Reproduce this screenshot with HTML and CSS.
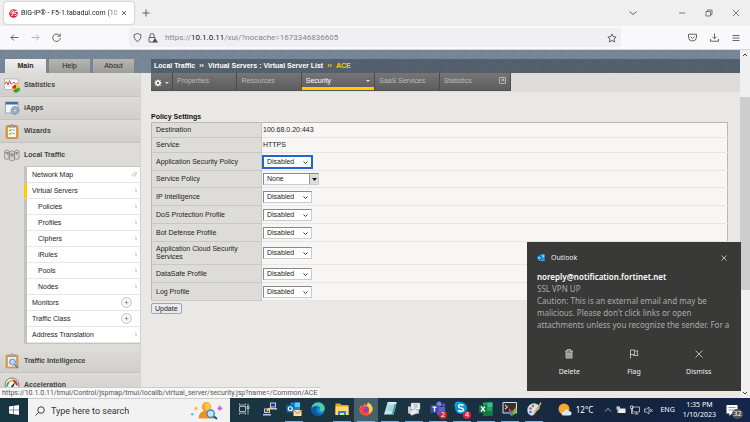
FILE: index.html
```html
<!DOCTYPE html>
<html lang="en">
<head>
<meta charset="utf-8">
<title>BIG-IP® - F5-1.tabadul.com</title>
<link rel="stylesheet" href="styles.css">
</head>
<body>
<header class="tabstrip">
  <div class="browser-tab">
    <svg class="i9" viewBox="0 0 18 18"><circle cx="9" cy="9" r="8.5" fill="#c8202f"/><path d="M3 6q3-4 6-2M4 13l4-1V6q0-2 3-2M3 8h7M11 13q4 1 4-2t-4-2l1-4h4" fill="none" stroke="#fff" stroke-width="1.8"/></svg>
    <span class="browser-tab-title">BIG-IP® - F5-1.tabadul.com (10</span>
    <button class="bare" aria-label="Close tab"><svg class="i6" viewBox="0 0 12 12"><path d="M2 2l8 8M10 2l-8 8" class="ln"/></svg></button>
  </div>
  <button class="bare new-tab" aria-label="New tab"><svg class="i8" viewBox="0 0 16 16"><path d="M8 1v14M1 8h14" class="ln"/></svg></button>
  <div class="window-buttons">
    <button class="bare" aria-label="List tabs"><svg class="i8" viewBox="0 0 16 16"><path d="M1 5l7 6 7-6" class="ln"/></svg></button>
    <button class="bare push" aria-label="Minimize"><svg class="i8" viewBox="0 0 16 16"><path d="M2 8h12" class="ln thin"/></svg></button>
    <button class="bare" aria-label="Restore"><svg class="i8" viewBox="0 0 16 16"><path d="M2 5h9v9H2zM5 5V2h9v9h-3" class="ln thin"/></svg></button>
    <button class="bare" aria-label="Close"><svg class="i8" viewBox="0 0 16 16"><path d="M2 2l12 12M14 2L2 14" class="ln thin"/></svg></button>
  </div>
</header>
<nav class="toolbar" aria-label="Browser">
  <div class="history">
    <button class="bare" aria-label="Back"><svg class="i9" viewBox="0 0 18 18"><path d="M17 9H2M8 3L2 9l6 6" class="ln"/></svg></button>
    <button class="bare faded" aria-label="Forward"><svg class="i9" viewBox="0 0 18 18"><path d="M1 9h15M10 3l6 6-6 6" class="ln"/></svg></button>
    <button class="bare" aria-label="Reload"><svg class="i9" viewBox="0 0 18 18"><path d="M15 5a7.500 7.500 0 1 0 1.500 5M16.500 1v5.500H11" class="ln"/></svg></button>
  </div>
  <div class="urlbar">
    <svg class="i9" viewBox="0 0 18 18"><path d="M9 1l7 2.500C16 10 14 14.500 9 17 4 14.500 2 10 2 3.500z" class="ln"/></svg>
    <svg class="i10" viewBox="0 0 20 20"><path d="M4 9V5a4 4 0 0 1 8 0v4M9 18H2V9h12v2" class="ln"/><path d="M14 10l6 9H8z" fill="#4a4a52"/></svg>
    <span class="url">https://<b>10.1.0.11</b>/xui/?nocache=1673346836605</span>
    <button class="bare" aria-label="Bookmark"><svg class="i10" viewBox="0 0 20 20"><path d="M10 2l2.500 5.300 5.800.7-4.300 4 1.200 5.800L10 15l-5.200 2.800L6 12 1.700 8l5.800-.7z" class="ln"/></svg></button>
  </div>
  <div class="tools">
    <button class="bare" aria-label="Pocket"><svg class="i9" viewBox="0 0 18 18"><path d="M1 2.500h16V8a8 8 0 0 1-16 0zM5 7l4 4 4-4" class="ln"/></svg></button>
    <button class="bare" aria-label="Downloads"><svg class="i9" viewBox="0 0 18 18"><path d="M9 1v10M5 7.500L9 11.500l4-4M1 12v4.500h16V12" class="ln"/></svg></button>
    <button class="bare" aria-label="Menu"><svg class="i8" viewBox="0 0 16 16"><path d="M1 3h14M1 8h14M1 13h14" class="ln"/></svg></button>
  </div>
</nav>

<div class="viewport">
  <div class="page">
    <header class="site-head">
      <nav class="main-tabs"><a href="#" class="on">Main</a><a href="#">Help</a><a href="#">About</a></nav>
      <div class="crumbs"><span>Local Traffic</span><i>››</i><span>Virtual Servers : Virtual Server List</span><i class="gold">››</i><span class="gold">ACE</span></div>
    </header>
    <div class="columns">
      <aside class="sidebar">
        <a href="#" class="section"><svg class="i16" viewBox="0 0 32 32"><path d="M1 4h27v21H1z" fill="#fff" stroke="#aaa" stroke-width="1.500"/><path d="M3 19h23" stroke="#ccc"/><path d="M2 14l3-5 3 7 3-9 3 7 3-1 3-3 3 4 4-1" fill="none" stroke="#d8474d" stroke-width="2"/><circle cx="24" cy="23" r="7.500" fill="#f3c62b"/><path d="M24 23v-7.500a7.500 7.500 0 0 0-7.500 7.500z" fill="#d62a2a"/><path d="M24 23l7.500-1A7.500 7.500 0 0 1 18 28z" fill="#39a535"/></svg>Statistics</a>
        <a href="#" class="section"><svg class="i16" viewBox="0 0 32 32"><path d="M3 4h25v22H3z" fill="#f3f6f8" stroke="#8297a9" stroke-width="1.500"/><path d="M3 4h25v5H3z" fill="#3c73ab"/><circle cx="22" cy="21" r="8" fill="#9eb0bc" stroke="#728796" stroke-width="2" stroke-dasharray="3 2"/><circle cx="22" cy="21" r="3" fill="#d8e1e6" stroke="#728796"/></svg>iApps</a>
        <a href="#" class="section"><svg class="i16" viewBox="0 0 32 32"><rect x="4" y="5" width="24" height="26" rx="3" fill="#e69b3d" stroke="#ac6d25"/><path d="M8 9h16v19H8z" fill="#f5f7ef"/><path d="M10 8V5h4q2-6 4 0h4v3z" fill="#aaa" stroke="#777"/><path d="M10 14l2 2 3-4M10 21l2 2 3-4" fill="none" stroke="#55a834" stroke-width="2"/><path d="M17 14h5M17 21h5" stroke="#aaa" stroke-width="2"/></svg>Wizards</a>
        <a href="#" class="section open"><svg class="i16" viewBox="0 0 32 32"><g fill="#d4d3cf" stroke="#85847f" stroke-width="1.500"><path d="M1 8q4-4 9 0v15q-5 4-9 0zM21 8q4-4 9 0v15q-5 4-9 0zM11 10q5-5 10 0v16q-5 4-10 0z"/><path d="M2 11h7M23 11h6M12 14h8M12 18h8"/></g><circle cx="7" cy="13" r="2" fill="#c65f5b"/><circle cx="25" cy="13" r="2" fill="#c65f5b"/><circle cx="16" cy="15" r="2" fill="#c65f5b"/></svg>Local Traffic</a>
        <nav class="submenu">
          <a href="#">Network Map<svg class="i5" viewBox="0 0 10 10"><path d="M1 8V4h6v4zM4 3V1h5v4" fill="none" stroke="#aaa"/></svg></a>
          <a href="#" class="current">Virtual Servers<i>›</i></a>
          <a href="#" class="child">Policies<i>›</i></a>
          <a href="#" class="child">Profiles<i>›</i></a>
          <a href="#" class="child">Ciphers<i>›</i></a>
          <a href="#" class="child">iRules<i>›</i></a>
          <a href="#" class="child">Pools<i>›</i></a>
          <a href="#" class="child">Nodes<i>›</i></a>
          <a href="#">Monitors<svg class="plus" viewBox="0 0 22 22"><circle cx="11" cy="11" r="9.500" fill="none" stroke="#aaa" stroke-width="1.600"/><path d="M11 7v8M7 11h8" stroke="#999" stroke-width="2"/></svg></a>
          <a href="#">Traffic Class<svg class="plus" viewBox="0 0 22 22"><circle cx="11" cy="11" r="9.500" fill="none" stroke="#aaa" stroke-width="1.600"/><path d="M11 7v8M7 11h8" stroke="#999" stroke-width="2"/></svg></a>
          <a href="#">Address Translation<i>›</i></a>
        </nav>
        <a href="#" class="section"><svg class="i16" viewBox="0 0 32 32"><rect x="4" y="4" width="24" height="26" rx="2" fill="#e0a458" stroke="#b27a35"/><path d="M8 8h16v19H8z" fill="#edf1f3"/><path d="M10 7V4h4q2-6 4 0h4v3z" fill="#bbb" stroke="#777"/><circle cx="17" cy="18" r="6" fill="#b9d8ef" stroke="#6b91b1" stroke-width="2"/><path d="M21 23l7 7" stroke="#5e7e9d" stroke-width="3"/></svg>Traffic Intelligence</a>
        <a href="#" class="section"><svg class="i16" viewBox="0 0 32 32"><circle cx="16" cy="16" r="14" fill="#f6f6f6" stroke="#777" stroke-width="2"/><g fill="none" stroke-width="4"><path d="M6 19q0-6 4-9" stroke="#39a64b"/><path d="M10 10q4-4 8-3" stroke="#eebd26"/><path d="M18 7q7 2 8 10" stroke="#d63232"/></g><path d="M14 19l9-10-5 12z" fill="#222"/></svg>Acceleration</a>
      </aside>
      <main class="content">
        <nav class="subtabs">
          <div class="subtab-list">
            <button class="gear" aria-label="Options"><svg class="i8" viewBox="0 0 16 16"><circle cx="8" cy="8" r="4" fill="none" stroke="#fff" stroke-width="3"/><path d="M8 1v3M8 12v3M1 8h3M12 8h3M3 3l2 2M11 11l2 2M13 3l-2 2M5 11l-2 2" stroke="#fff" stroke-width="2"/></svg><svg class="i4" viewBox="0 0 8 8"><path d="M0 2h8L4 6z" fill="#ddd"/></svg></button>
            <a href="#">Properties</a><a href="#">Resources</a>
            <a href="#" class="on wide">Security<svg class="i4" viewBox="0 0 8 8"><path d="M0 2h8L4 6z" fill="#ddd"/></svg></a>
            <a href="#">SaaS Services</a>
            <a href="#" class="wide last">Statistics<svg class="i7" viewBox="0 0 14 14"><rect x="1" y="1" width="12" height="12" rx="1" fill="none" stroke="#ccc" stroke-width="1.500"/><path d="M5 9l4-4M5.500 4.500H9.500V8.500" fill="none" stroke="#ddd" stroke-width="1.500"/></svg></a>
          </div>
        </nav>
        <form class="policy">
          <h1>Policy Settings</h1>
          <table>
            <tbody>
            <tr class="short"><th scope="row">Destination</th><td>100.68.0.20:443</td></tr>
            <tr class="short"><th scope="row">Service</th><td>HTTPS</td></tr>
            <tr><th scope="row"><label for="asp">Application Security Policy</label></th><td><span class="pick focus"><select id="asp"><option>Disabled</option><option>Enabled</option></select><svg class="i5" viewBox="0 0 10 10"><path d="M1 3l4 4 4-4" class="chev"/></svg></span></td></tr>
            <tr class="snug"><th scope="row"><label for="sp">Service Policy</label></th><td><span class="pick combo"><select id="sp"><option>None</option></select><svg class="i5" viewBox="0 0 10 10"><path d="M0 2h10L5 8z" fill="#111"/></svg></span></td></tr>
            <tr><th scope="row"><label for="ipi">IP Intelligence</label></th><td><span class="pick"><select id="ipi"><option>Disabled</option><option>Enabled</option></select><svg class="i5" viewBox="0 0 10 10"><path d="M1 3l4 4 4-4" class="chev"/></svg></span></td></tr>
            <tr><th scope="row"><label for="dos">DoS Protection Profile</label></th><td><span class="pick"><select id="dos"><option>Disabled</option><option>Enabled</option></select><svg class="i5" viewBox="0 0 10 10"><path d="M1 3l4 4 4-4" class="chev"/></svg></span></td></tr>
            <tr><th scope="row"><label for="bot">Bot Defense Profile</label></th><td><span class="pick"><select id="bot"><option>Disabled</option><option>Enabled</option></select><svg class="i5" viewBox="0 0 10 10"><path d="M1 3l4 4 4-4" class="chev"/></svg></span></td></tr>
            <tr class="double"><th scope="row"><label for="acs">Application Cloud Security Services</label></th><td><span class="pick"><select id="acs"><option>Disabled</option><option>Enabled</option></select><svg class="i5" viewBox="0 0 10 10"><path d="M1 3l4 4 4-4" class="chev"/></svg></span></td></tr>
            <tr><th scope="row"><label for="ds">DataSafe Profile</label></th><td><span class="pick"><select id="ds"><option>Disabled</option><option>Enabled</option></select><svg class="i5" viewBox="0 0 10 10"><path d="M1 3l4 4 4-4" class="chev"/></svg></span></td></tr>
            <tr><th scope="row"><label for="log">Log Profile</label></th><td><span class="pick"><select id="log"><option>Disabled</option><option>Enabled</option></select><svg class="i5" viewBox="0 0 10 10"><path d="M1 3l4 4 4-4" class="chev"/></svg></span></td></tr>
            </tbody>
          </table>
          <button type="button" class="update">Update</button>
        </form>
      </main>
    </div>
  </div>
  <div class="scrollbar">
    <svg class="i6" viewBox="0 0 12 12"><path d="M2 8l4-4 4 4" class="chev"/></svg>
    <div class="track"><div class="thumb"></div></div>
    <svg class="i6" viewBox="0 0 12 12"><path d="M2 4l4 4 4-4" class="chev"/></svg>
  </div>
  <div class="status">https://10.1.0.11/tmui/Control/jspmap/tmui/locallb/virtual_server/security.jsp?name=/Common/ACE</div>
  <section class="toast" aria-label="Outlook notification">
    <header><svg class="i8" viewBox="0 0 16 16"><path d="M5 1h10v13H5z" fill="#1490df"/><path d="M10 1h5v6h-5z" fill="#50d9ff"/><path d="M5 9l5 3 5-3v5H5z" fill="#28a8ea"/><path d="M0 4h9v8H0z" fill="#0a63b5"/><circle cx="4.500" cy="8" r="2.200" fill="none" stroke="#fff" stroke-width="1.400"/></svg><span>Outlook</span><button class="bare" aria-label="Close notification"><svg class="i6" viewBox="0 0 12 12"><path d="M1 1l10 10M11 1L1 11" class="lt"/></svg></button></header>
    <h2>noreply@notification.fortinet.net</h2>
    <p>SSL VPN UP</p>
    <p>Caution: This is an external email and may be<br>malicious. Please don't click links or open<br>attachments unless you recognize the sender. For a</p>
    <div class="actions">
      <button><svg class="i10" viewBox="0 0 20 20"><path d="M2 4h16M7 4V1h6v3M4 4v14h12V4M8 8v7M12 8v7" class="lt"/><path d="M4 5h12v13H4z" fill="#ddd" opacity=".45"/></svg>Delete</button>
      <button><svg class="i10" viewBox="0 0 20 20"><path d="M3 19V2h8v9H3M11 4h7l-2 4 2 5H9v-2" class="lt"/></svg>Flag</button>
      <button><svg class="i10" viewBox="0 0 20 20"><path d="M3 3l14 14M17 3L3 17" class="lt"/></svg>Dismiss</button>
    </div>
  </section>
</div>

<footer class="taskbar">
  <button class="bare start" aria-label="Start"><svg class="i10" viewBox="0 0 20 20"><path d="M0 3l9-1.300V9.500H0zM10 1.500L20 0v9.500H10zM0 10.500h9v7.800L0 17zM10 10.500h10V20l-10-1.500z" fill="#fff"/></svg></button>
  <div class="search">
    <svg class="i10" viewBox="0 0 20 20"><circle cx="12" cy="8" r="6.500" fill="none" stroke="#222" stroke-width="1.700"/><path d="M7.500 12.500L1 19" stroke="#222" stroke-width="1.700"/></svg>
    <input type="text" aria-label="Search" placeholder="Type here to search">
    <svg class="doodle" viewBox="0 0 64 36"><circle cx="31" cy="11" r="9" fill="#f6a52b"/><path d="M16 33q1-13 11-14h8q9 2 11 14z" fill="#ef8f20"/><path d="M27 8q5-8 11 0v10h-7z" fill="#ffc352"/><path d="M43 28l8 6" stroke="#294ea2" stroke-width="4"/><circle cx="39" cy="24" r="7" fill="#b8e8fb" stroke="#4586cf" stroke-width="2.500"/><circle cx="11" cy="14" r="3" fill="#f5c13d"/><circle cx="4" cy="25" r="2.500" fill="#4fc5dc"/><path d="M56 9v9M52 14h9" stroke="#c35ada" stroke-width="3"/></svg>
  </div>
  <div class="apps">
    <button class="task-view" aria-label="Task view"><svg class="i12" viewBox="0 0 24 24"><path d="M3 1v3h12V1M3 23v-3h12v3M3 7h12v10H3zM20 1v22M18 7h4v4h-4z" fill="none" stroke="#ddd" stroke-width="1.500"/></svg></button>
    <button aria-label="PuTTY"><svg class="i14" viewBox="0 0 28 28"><g fill="#c9cbd1"><path d="M14 1h12v10H14zM12 12h16v3H12zM2 13h12v9H2zM0 24h16v3H0z"/></g><path d="M16 3h8v6h-8zM4 15h8v5H4z" fill="#1e35b8"/><path d="M20 9l-8 5 3 1-9 5 3-5-3-1z" fill="#ffe62e"/></svg></button>
    <button class="run" aria-label="Outlook"><svg class="i16" viewBox="0 0 32 32"><path d="M9 3h19v18H9z" fill="#1684d8"/><path d="M18 3h10v9H18z" fill="#55cef8"/><path d="M1 8h15v15H1z" fill="#1267b8"/><circle cx="8.500" cy="15.500" r="4" fill="none" stroke="#fff" stroke-width="2.400"/><path d="M15 18h16v12H15z" fill="#f7dfae"/><path d="M15 18l8 7 8-7" fill="none" stroke="#c07b2b" stroke-width="2"/></svg></button>
    <button aria-label="Edge"><svg class="i14" viewBox="0 0 28 28"><circle cx="14" cy="14" r="13.500" fill="#1687cf"/><path d="M1 13C3-2 25-3 27.500 12c0 8-9 8-11 5 5-6-1-11-7-9-5 1-8 4-8.500 5z" fill="#48d2a0"/><path d="M1 13c4-7 12-5 12-2-5 4-2 12 5 13 4 0 6-1 8-2-7 10-25 6-25-9z" fill="#0b5aa9"/></svg></button>
    <button class="run" aria-label="File Explorer"><svg class="i14" viewBox="0 0 28 28"><path d="M1 3h9l3 3h14v20H1z" fill="#e9a720"/><path d="M1 9h26v17H1z" fill="#ffdc6b"/><path d="M6 26v-8h16v8h-4v-4h-8v4z" fill="#2887d4"/></svg></button>
    <button class="run active" aria-label="Firefox"><svg class="i14" viewBox="0 0 28 28"><path d="M14 27C5 27 0 20 1 12l3-6 3 4 4-7 5 4 2-6c7 4 10 9 9 15s-6 11-13 11z" fill="#ff7127"/><path d="M18 1c7 4 10 9 9 15-1 5-6 6-9 5 5-5 1-11-3-13z" fill="#ffd13a"/><circle cx="14" cy="15" r="6" fill="#7a46dd"/><path d="M2 12c5-4 8-1 12 0l-6 4c2 6 8 5 12 3-2 11-18 8-18-7z" fill="#ff3d4b"/></svg></button>
    <button class="run" aria-label="Notepad"><svg class="i14" viewBox="0 0 28 28"><path d="M9 2h18l-6 23H2z" fill="#bfe7ef"/><path d="M23 4h4l-6 22h-4z" fill="#4f9ca9"/><path d="M10 8h11M9 12h11M8 16h11" stroke="#79b8c4" stroke-width="1.500"/><path d="M9 1h18" stroke="#eee" stroke-width="3"/></svg></button>
    <button class="run" aria-label="Devices"><svg class="i14" viewBox="0 0 28 28"><path d="M2 9h22v14H2z" fill="#c9d2d6"/><path d="M8 2h18v13H8z" fill="#f4f7f8" stroke="#889"/><path d="M3 19l14-6 7 8-15 6z" fill="#e9ecee" stroke="#88939a"/><path d="M13 6h9M13 10h9" stroke="#8ca8b5" stroke-width="2"/></svg></button>
    <button class="run" aria-label="Teams, 2 notifications"><svg class="i16" viewBox="0 0 32 32"><circle cx="18" cy="6" r="5" fill="#7b83eb"/><circle cx="27" cy="8" r="3.500" fill="#5059c9"/><path d="M10 12h20v11q-5 9-15 5z" fill="#5b62c9"/><path d="M1 8h16v16H1z" fill="#4048a8"/><path d="M5 12h8M9 12v9" stroke="#fff" stroke-width="2.500"/></svg><span class="badge">2</span></button>
    <button class="run" aria-label="Skype, 4 notifications"><svg class="i16" viewBox="0 0 32 32"><circle cx="9" cy="9" r="8" fill="#00a5ea"/><circle cx="14" cy="14" r="12" fill="#0098dd"/><path d="M19 9q-9-4-10 1 0 3 5 4t5 4q-2 5-11 1" fill="none" stroke="#fff" stroke-width="3"/></svg><span class="badge">4</span></button>
    <button class="run" aria-label="Excel"><svg class="i14" viewBox="0 0 28 28"><path d="M8 1h19v26H8z" fill="#21a366"/><path d="M17 1h10v9H17z" fill="#33c481"/><path d="M8 18h19v9H8z" fill="#107c41"/><path d="M0 6h16v16H0z" fill="#107040"/><path d="M4 9l8 10M12 9L4 19" stroke="#fff" stroke-width="2.500"/></svg></button>
    <button class="run" aria-label="Terminal"><svg class="i16" viewBox="0 0 32 32"><path d="M2 3h27v21H2z" fill="#333" stroke="#ddd" stroke-width="2"/><path d="M6 8l5 4-5 4" fill="none" stroke="#fff" stroke-width="2"/><path d="M14 14l6 6 8-9v7l-8 9-6-6z" fill="#e63939"/><path d="M21 21l8-7v8l-8 8z" fill="#5bc63a"/><path d="M14 20l6 6v5l-6-5z" fill="#308bea"/></svg></button>
    <button class="run" aria-label="Paint"><svg class="i16" viewBox="0 0 32 32"><path d="M3 18C3 7 15 2 23 7c7 5 3 12-2 12-5 1-2 6-6 9-6 3-12-2-12-10z" fill="#d5e5ef" stroke="#8dabc0"/><circle cx="9" cy="15" r="2.500" fill="#e44"/><circle cx="14" cy="10" r="2.500" fill="#3a9c49"/><circle cx="9" cy="22" r="2.500" fill="#397bd5"/><path d="M29 2L17 21l-3 7 6-5L31 5z" fill="#e0a64b"/></svg></button>
  </div>
  <div class="tray">
    <svg class="i14" viewBox="0 0 28 28"><circle cx="12" cy="12" r="11" fill="#f7a928"/><path d="M9 25q-4-6 3-8 4-7 10-1 6 1 5 6-1 3-5 3z" fill="#dbe7f7"/></svg>
    <span class="temp">12°C</span>
    <svg class="i8" viewBox="0 0 16 16"><path d="M2 11l6-6 6 6" class="lt"/></svg>
    <svg class="i10" viewBox="0 0 20 20"><path d="M5 7h14v9H5z" fill="#eee"/><path d="M1 3h7v6H1z" fill="#ccd"/><path d="M4 9v7" stroke="#eee" stroke-width="2"/></svg>
    <svg class="i10" viewBox="0 0 20 20"><path d="M5 4h14v10H5zM9 18h8M13 14v4M1 2h5v5H1zM3 7v10h4" class="lt"/></svg>
    <svg class="i9" viewBox="0 0 18 18"><path d="M1 6h4l5-4v14l-5-4H1zM12 6l5 6M17 6l-5 6" class="lt"/></svg>
    <span class="lang">ENG</span>
    <time>1:35 PM<br>1/10/2023</time>
    <button class="bare notes" aria-label="32 notifications"><svg class="i12" viewBox="0 0 24 24"><path d="M1 2h22v17H12l-5 5v-5H1z" fill="#fff"/><path d="M5 7h14M5 12h14" stroke="#678" stroke-width="1.500"/></svg><span class="count">32</span></button>
  </div>
</footer>
</body>
</html>
```
FILE: styles.css
```css
* { box-sizing: border-box; }
body {
  margin: 0;
  min-height: 100vh;
  display: flex;
  flex-direction: column;
  font: 7px/8px "Liberation Sans", Arial, sans-serif;
  color: #222;
  background: #efefef;
}
a { color: inherit; text-decoration: none; }
i { font-style: normal; }
button, select, input { font: inherit; color: inherit; }
svg { display: block; flex: none; }
.bare { background: none; border: 0; padding: 0; position: relative; }
.i4 { width: 4px; height: 4px; }
.i5 { width: 5px; height: 5px; }
.i6 { width: 6px; height: 6px; }
.i7 { width: 7px; height: 7px; }
.i8 { width: 8px; height: 8px; }
.i9 { width: 9px; height: 9px; }
.i10 { width: 10px; height: 10px; }
.i12 { width: 12px; height: 12px; }
.i14 { width: 14px; height: 14px; }
.i16 { width: 16px; height: 16px; }
.ln { fill: none; stroke: #4a4a52; stroke-width: 1.7; }
.thin { stroke-width: 1.4; }
.lt { fill: none; stroke: #ddd; stroke-width: 1.5; }
.chev { fill: none; stroke: #222; stroke-width: 1.8; }

/* Browser chrome */
.tabstrip {
  display: flex;
  align-items: center;
  height: 26px;
  padding: 0 10px 0 4px;
  font-family: Roboto, "Noto Sans", sans-serif;
}
.browser-tab {
  display: flex;
  align-items: center;
  width: 130px;
  height: 22px;
  padding: 0 7px 0 5px;
  gap: 3px;
  background: #fff;
  border-radius: 3px;
  box-shadow: 0 0 2px #999;
}
.browser-tab-title {
  flex: 1;
  white-space: nowrap;
  -webkit-mask-image: linear-gradient(90deg, #000 88%, rgba(0, 0, 0, .3));
  mask-image: linear-gradient(90deg, #000 88%, rgba(0, 0, 0, .3));
}
.new-tab { margin-left: 8px; }
.window-buttons { display: flex; margin-left: auto; gap: 19px; }
.push { margin-left: 22px; }
.toolbar {
  display: flex;
  align-items: center;
  height: 24px;
  padding: 0 10px;
  background: #f9f9fb;
  border-bottom: 1px solid #d5d5da;
}
.history { display: flex; gap: 12px; width: 119px; }
.faded { opacity: .45; }
.urlbar {
  flex: 1;
  display: flex;
  align-items: center;
  gap: 6px;
  height: 19px;
  padding: 0 4px;
  background: #f0f0f4;
  border-radius: 2px;
  font: 8px/10px Roboto, "Noto Sans", sans-serif;
  color: #85858d;
}
.url { flex: 1; margin-left: 1px; }
.url b { font-weight: 400; color: #15141a; }
.tools { display: flex; gap: 13px; justify-content: flex-end; width: 119px; }

/* Page area */
.viewport { position: relative; flex: 1; display: flex; overflow: hidden; }
.page { flex: 1; display: flex; flex-direction: column; height: 348px; background: #e9e8e4; overflow: hidden; }
.site-head {
  display: flex;
  align-items: flex-end;
  height: 23px;
  flex: none;
  background: repeating-linear-gradient(135deg, #748496 0 1px, #788899 1px 2px);
}
.main-tabs { display: flex; gap: 3px; width: 151px; padding-left: 5px; }
.main-tabs a {
  width: 41px;
  height: 14px;
  line-height: 14px;
  text-align: center;
  background: linear-gradient(#b5b5b1, #9d9d99);
}
.main-tabs .on { font-weight: 700; background: linear-gradient(#f1f1ef, #dddcd8); }
.crumbs {
  flex: 1;
  display: flex;
  gap: 4px;
  height: 14px;
  padding-left: 3px;
  line-height: 14px;
  font-weight: 700;
  color: #fff;
  background: repeating-linear-gradient(135deg, #515d69 0 1px, #56626e 1px 2px);
}
.crumbs .gold { color: #fc0; }
.columns { flex: 1; display: flex; min-height: 0; }
.sidebar { width: 141px; flex: none; background: #dddcd8; border-right: 1px solid #d3d2ce; }
.section {
  display: flex;
  align-items: center;
  gap: 4px;
  height: 24px;
  padding-left: 4px;
  font-weight: 700;
  color: #444;
  background: linear-gradient(#dddcd8, #d0cfcb);
  border-bottom: 1px solid #c4c3bf;
}
.section:nth-child(2), .section:nth-child(3) { height: 23px; }
.section.open { height: 23px; background: #dddcd8; border: 0; }
.submenu { margin: 0 0 5px 24px; border: solid #c4c3bf; border-width: 1px 0 1px 3px; background: #fff; }
.submenu a {
  display: flex;
  align-items: center;
  justify-content: space-between;
  height: 16px;
  padding: 0 3px 0 5px;
  border-bottom: 1px solid #e6e6e6;
}
.submenu i { color: #999; }
.submenu .child { padding-left: 11px; }
.submenu .current { margin-left: -3px; border-left: 3px solid #fc0; }
.plus { width: 11px; height: 11px; margin-right: 5px; }

.content { flex: 1; min-width: 0; padding-left: 10px; }
.subtabs { background: #dddcd8; height: 19px; }
.subtab-list {
  display: flex;
  width: 360px;
  height: 18px;
  color: #bbb;
  background: linear-gradient(#767676, #5c5c5c);
  border-bottom: 1px solid #555;
}
.subtab-list a, .gear {
  display: flex;
  justify-content: space-between;
  flex: 1 1 64px;
  padding: 4px 4px 0;
  border-right: 1px solid #4c4c4c;
}
.gear { flex: 0 0 22px; align-items: center; padding: 2px 3px 0; background: none; border-width: 0 1px 0 0; }
.subtab-list .wide { flex-basis: 73px; }
.subtab-list .last { flex-basis: 71px; }
.subtab-list .on { color: #fff; box-shadow: inset 0 -3px #fc0; }
.subtab-list .on svg { margin-top: 2px; }

.policy { padding: 20px 12px 0 0; }
h1 { margin: 0 0 1px; font-size: 7px; line-height: 9px; color: #111; }
table { width: 100%; border-collapse: collapse; background: #f7f6f5; border: 1px solid #b9b9b5; }
th, td { height: 18px; padding: 0; text-align: left; vertical-align: middle; font-weight: 400; border-bottom: 1px solid #e6e5e3; }
th { width: 110px; padding: 0 4px; background: #dddcd8; border-color: #c9c8c4; border-right: 1px solid #c9c8c4; }
td { padding-left: 1px; }
.short th, .short td { height: 15px; }
.snug th, .snug td { height: 17px; }
.double th, .double td { height: 23px; }
.pick { position: relative; display: block; width: 49px; height: 12px; }
.pick select {
  display: block;
  width: 100%;
  height: 100%;
  padding: 0 3px;
  appearance: none;
  background: #fff;
  border: 1px solid #ccc;
  border-top-color: #888;
  border-left-color: #888;
  border-radius: 0;
}
.pick svg { position: absolute; right: 4px; top: 4px; pointer-events: none; }
.focus select { outline: 1px solid #2264d1; border-color: #2264d1; }
.combo { width: 56px; }
.combo select { background: linear-gradient(90deg, #fff 45px, #999 45px 46px, #ddd 46px); }
.combo svg { right: 2px; }
.update { display: block; margin-top: 2px; height: 11px; padding: 0 3px; line-height: 8px; background: #eaeaee; border: 1px solid #a5a5ad; border-radius: 2px; }

.scrollbar { display: flex; flex-direction: column; align-items: center; justify-content: space-between; width: 10px; padding: 2px 0; background: #f0f0f0; }
.track { flex: 1; width: 100%; height: 0; padding-top: 39px; }
.thumb { height: 66%; background: #cdcdcd; }
.status {
  position: absolute;
  left: 0;
  bottom: 0;
  padding: 0 3px 0 2px;
  font: 7px/10px Roboto, "Noto Sans", sans-serif;
  color: #555;
  background: #f7f7f8;
  border-top: 1px solid #ccc;
  white-space: nowrap;
}

/* Notification */
.toast {
  position: absolute;
  right: 9px;
  bottom: 7px;
  width: 214px;
  height: 149px;
  padding: 9px 10px 0;
  color: #ababab;
  background: #393938;
  font: 8px/12px "Noto Sans", sans-serif;
}
.toast header { display: flex; align-items: center; gap: 6px; height: 13px; margin-bottom: 7px; font-size: 7px; color: #eee; }
.toast header .bare { margin: 0 4px 0 auto; }
.toast h2 { margin: 0; font-size: 8px; font-weight: 600; color: #fff; }
.toast p { margin: 0; white-space: nowrap; overflow: hidden; }
.actions { display: flex; margin: 18px -10px 0; padding: 0 10px; }
.actions button { flex: 1; display: flex; flex-direction: column; align-items: center; gap: 7px; padding: 0; background: none; border: 0; font-size: 7px; color: #eee; }

/* Taskbar */
.taskbar {
  display: flex;
  height: 24px;
  color: #fff;
  background: linear-gradient(90deg, #173540, #1c3442 55%, #14233f 85%, #14264a);
  font: 8px/10px "Noto Sans", sans-serif;
}
.start { width: 28px; display: flex; align-items: center; justify-content: center; }
.search { display: flex; align-items: center; gap: 6px; width: 202px; padding: 0 6px 0 7px; background: #f2f2f2; border-top: 1px solid #ccc; color: #333; }
.search input { flex: 1; min-width: 0; padding: 0; border: 0; background: none; font: 9px/12px Roboto, "Noto Sans", sans-serif; }
.search input::placeholder { color: #333; opacity: 1; }
.doodle { width: 34px; height: 19px; }
.apps { display: flex; }
.apps button { position: relative; display: flex; align-items: center; justify-content: center; width: 24px; padding: 0; background: none; border: 0; border-bottom: 2px solid transparent; }
.apps .task-view { width: 28px; }
.apps .run::after { content: ""; position: absolute; left: 3px; right: 3px; bottom: -2px; height: 1px; background: #76b9ed; }
.apps .active { background: #46616b; }
.badge, .count { position: absolute; right: 3px; bottom: 1px; width: 8px; height: 8px; border-radius: 50%; background: #d72638; font-size: 7px; line-height: 8px; text-align: center; }
.tray { display: flex; align-items: center; gap: 4px; margin-left: auto; padding-right: 8px; }
.temp { margin-right: 7px; }
.lang { margin-left: 3px; font-size: 7px; }
time { margin: 0 6px 0 4px; font-size: 7px; text-align: center; }
.notes { width: 16px; height: 18px; }
.count { right: -1px; bottom: 0; width: 11px; height: 10px; line-height: 10px; color: #fff; background: #555; }
```
